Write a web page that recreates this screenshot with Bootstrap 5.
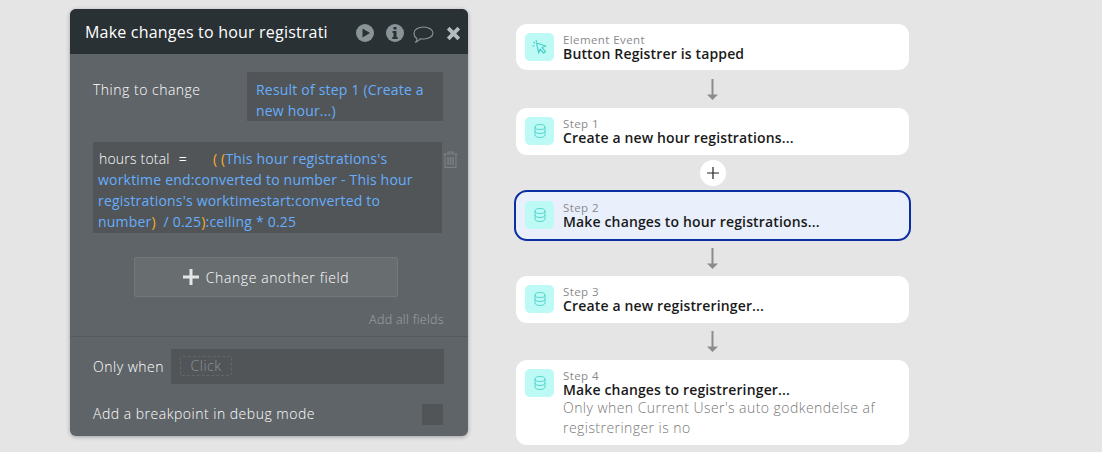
<!DOCTYPE html>
<html lang="en">
  <head>
    <meta charset="UTF-8" />
    <title>Workflow editor</title>
    <link href="https://cdn.jsdelivr.net/npm/bootstrap@5.3.0/dist/css/bootstrap.min.css" rel="stylesheet" />
    <style>
      body {
        background: #e5e5e5;
        font-family: "Open Sans", sans-serif;
        overflow: hidden;
        height: 452px;
      }
      .page-wrap { padding-left: 70px; }

      /* property editor */
      .editor-panel {
        width: 398px;
        height: 427px;
        margin-top: 9px;
        background: #5f6468;
        border-radius: 6px;
        box-shadow: 0 1px 4px rgba(0, 0, 0, .3);
        color: #fff;
        font-size: 14px;
        font-weight: 300;
        letter-spacing: .5px;
      }
      .editor-head {
        height: 45px;
        background: #2a3134;
        border-radius: 6px 6px 0 0;
        padding-left: 15px;
      }
      .editor-title {
        width: 242px;
        font-size: 16px;
        font-weight: 400;
        letter-spacing: .2px;
        white-space: nowrap;
        overflow: hidden;
      }
      .head-icons { margin-left: 29px; gap: 12px; padding-top: 3px; }
      .icon-near { margin: 3px 0 0 -3px; }
      .dyn-box {
        background: #515558;
        color: #66aefc;
        font-weight: 400;
        line-height: 21px;
        letter-spacing: .2px;
      }
      .thing-row { padding: 18px 25px 0 23px; }
      .thing-label { width: 154px; padding-top: 7px; }
      .thing-box { width: 196px; height: 49px; padding: 7px 9px; }
      .field-row { padding: 21px 10px 0 23px; }
      .field-box { width: 349px; height: 91px; padding: 6px 5px; }
      .field-name { color: #fff; font-weight: 300; padding-left: 1px; margin-right: 9px; }
      .field-eq { color: #fff; margin-right: 26px; }
      .brace { color: #f5b025; }
      .trash-icon { margin: 9px 0 0 1px; }
      .change-btn {
        width: 264px;
        height: 40px;
        margin: 24px 0 0 64px;
        background: #686d70;
        border: 1px solid #73787b;
        border-radius: 2px;
        font-size: 14px;
        font-weight: 300;
        letter-spacing: .6px;
        color: #fff;
        gap: 7px;
      }
      .all-fields {
        padding: 14px 24px 8px 0;
        font-size: 12.5px;
        line-height: 17px;
        letter-spacing: .3px;
        color: #a2a5a7;
      }
      .when-row {
        border-top: 1px solid #565b5e;
        padding: 12px 24px 0 23px;
      }
      .when-box { width: 273px; height: 35px; margin-left: 7px; background: #515558; padding: 7px 9px; }
      .click-chip {
        width: 52px;
        height: 20px;
        border: 1px dashed #636769;
        border-radius: 3px;
        color: #8f9294;
        line-height: 17px;
        text-align: center;
      }
      .debug-row { padding: 20px 25px 0 23px; }
      .debug-label { margin-top: -2px; }
      .debug-check { width: 21px; height: 21px; background: #515558; }

      /* workflow column */
      .flow-col { width: 393px; margin-left: 48px; padding-top: 24px; }
      .flow-card {
        background: #fff;
        border-radius: 11px;
        padding: 9px 9px 0 9px;
        gap: 9px;
        color: #1a1a1a;
      }
      .card-h46 { height: 46px; }
      .card-h47 { height: 47px; }
      .card-active {
        height: 51px;
        width: 397px;
        margin-left: -2px;
        background: #e9f0fc;
        border: 2px solid #0c2ea3;
        border-radius: 13px;
        padding: 9px 9px 0 9px;
      }
      .card-tall { height: 85px; }
      .step-icon {
        width: 29px;
        height: 28px;
        flex: none;
        background: #bdf9f5;
        border-radius: 5px;
      }
      .step-kicker { font-size: 11.5px; line-height: 12px; color: #8a8a8a; padding-top: 1px; letter-spacing: .4px; }
      .step-name { font-size: 14px; line-height: 15px; font-weight: 600; letter-spacing: .15px; }
      .step-note { font-size: 14px; line-height: 20px; font-weight: 300; color: #777; margin-top: 1px; letter-spacing: .45px; }
      .arrow-gap { height: 38px; }
      .arrow-short { height: 35px; }
      .arrow-last { height: 37px; }
      .plus-gap { height: 35px; }
      .plus-circle { width: 26px; height: 26px; background: #fff; border-radius: 50%; }
    </style>
  </head>
  <body>
    <svg width="0" height="0" class="d-block">
      <symbol id="db" viewBox="0 0 12 14">
        <g fill="none" stroke="#55d8ce" stroke-width="1">
          <ellipse cx="6" cy="3" rx="5" ry="2.500" />
          <path d="M1 3v8c0 1.400 2.200 2.500 5 2.500s5-1.100 5-2.500V3M1 7c0 1.400 2.200 2.500 5 2.500S11 8.400 11 7" />
        </g>
      </symbol>
      <symbol id="down" viewBox="0 0 11 21">
        <path d="M4.500 0h2v15.500h4.500l-5.500 5.500-5.500-5.500h4.500z" fill="#8c8c8c" />
      </symbol>
    </svg>

    <div class="page-wrap d-flex align-items-start">
      <div class="editor-panel">
        <div class="editor-head d-flex align-items-center">
          <div class="editor-title">Make changes to hour registrations...</div>
          <div class="head-icons d-flex align-items-center">
            <svg width="18" height="18" viewBox="0 0 18 18"><circle cx="9" cy="9" r="9" fill="#8a9498" /><path d="M6.500 4.500l7.500 4.500-7.500 4.500z" fill="#2a3134" /></svg>
            <svg width="18" height="18" viewBox="0 0 18 18"><circle cx="9" cy="9" r="9" fill="#8a9498" /><path d="M7.500 3h3v2.500h-3zM6.500 7h4v6h1.200v2H6.300v-2h1.200V9h-1z" fill="#2a3134" /></svg>
            <svg class="icon-near" width="21" height="18" viewBox="0 0 21 18"><path d="M10.500 1c5.200 0 9.500 2.500 9.500 6s-4.300 6-9.500 6c-1 0-2-.1-3-.3C6.300 14.300 4.500 15.700 2.300 16.500c.9-1 1.500-2.200 1.700-3.800C2 11.500 1 9.300 1 7c0-3.500 4.300-6 9.500-6z" fill="none" stroke="#8a9498" stroke-width="1.100" /></svg>
            <svg width="15" height="15" viewBox="0 0 15 15"><path d="M2.200 2.200l10.600 10.600M12.800 2.200L2.200 12.800" stroke="#b4bcbf" stroke-width="3.800" /></svg>
          </div>
        </div>

        <div class="thing-row d-flex">
          <div class="thing-label">Thing to change</div>
          <div class="thing-box dyn-box">Result of step 1 (Create a new hour...)</div>
        </div>

        <div class="field-row d-flex align-items-start">
          <div class="field-box dyn-box">
            <span class="field-name">hours total</span><span class="field-eq">=</span><span class="brace">( (</span>This hour registrations's worktime end:converted to number - This hour registrations's worktimestart:converted to number<span class="brace">)</span> &nbsp;/ 0.25<span class="brace">)</span>:ceiling * 0.25
          </div>
          <svg class="trash-icon" width="15" height="17" viewBox="0 0 15 17"><g fill="none" stroke="#7b8083" stroke-width="1.200"><path d="M.500 3h14M5 3V1h5v2M2 3v13.400h11V3" /><path d="M5 6v8M7.500 6v8M10 6v8" stroke-width="1.500" /></g></svg>
        </div>

        <button type="button" class="change-btn btn d-flex align-items-center justify-content-center p-0">
          <svg width="16" height="16" viewBox="0 0 16 16"><path d="M6.500 0h3v6.500H16v3H9.500V16h-3V9.500H0v-3h6.500z" fill="#e4e5e6" /></svg>
          <span>Change another field</span>
        </button>

        <div class="all-fields text-end">Add all fields</div>

        <div class="when-row d-flex align-items-center">
          <span>Only when</span>
          <div class="when-box"><div class="click-chip">Click</div></div>
        </div>

        <div class="debug-row d-flex justify-content-between align-items-center">
          <span class="debug-label">Add a breakpoint in debug mode</span>
          <div class="debug-check"></div>
        </div>
      </div>

      <div class="flow-col">
        <div class="flow-card card-h46 d-flex">
          <div class="step-icon d-flex align-items-center justify-content-center">
            <svg width="15" height="15" viewBox="0 0 15 15"><g fill="none" stroke="#3fcfc4" stroke-width="1.100"><path d="M4.500 3l9 3-3.500 1.600 3.500 3.900-1.700 1.700-3.600-3.900-1.500 3.400z" /><path d="M1.500 2l1.500 1.200M.5 6h2M4 .3l.6 1.600" /></g></svg>
          </div>
          <div>
            <div class="step-kicker">Element Event</div>
            <div class="step-name">Button Registrer is tapped</div>
          </div>
        </div>

        <div class="arrow-gap d-flex align-items-center justify-content-center"><svg width="11" height="21"><use href="#down" /></svg></div>

        <div class="flow-card card-h47 d-flex">
          <div class="step-icon d-flex align-items-center justify-content-center"><svg width="12" height="14"><use href="#db" /></svg></div>
          <div>
            <div class="step-kicker">Step 1</div>
            <div class="step-name">Create a new hour registrations...</div>
          </div>
        </div>

        <div class="plus-gap d-flex align-items-center justify-content-center">
          <div class="plus-circle d-flex align-items-center justify-content-center">
            <svg width="12" height="12" viewBox="0 0 12 12"><path d="M6 0v12M0 6h12" stroke="#222" stroke-width="1.200" /></svg>
          </div>
        </div>

        <div class="flow-card card-active d-flex">
          <div class="step-icon d-flex align-items-center justify-content-center"><svg width="12" height="14"><use href="#db" /></svg></div>
          <div>
            <div class="step-kicker">Step 2</div>
            <div class="step-name">Make changes to hour registrations...</div>
          </div>
        </div>

        <div class="arrow-short d-flex align-items-center justify-content-center"><svg width="11" height="21"><use href="#down" /></svg></div>

        <div class="flow-card card-h47 d-flex">
          <div class="step-icon d-flex align-items-center justify-content-center"><svg width="12" height="14"><use href="#db" /></svg></div>
          <div>
            <div class="step-kicker">Step 3</div>
            <div class="step-name">Create a new registreringer...</div>
          </div>
        </div>

        <div class="arrow-last d-flex align-items-center justify-content-center"><svg width="11" height="21"><use href="#down" /></svg></div>

        <div class="flow-card card-tall d-flex">
          <div class="step-icon d-flex align-items-center justify-content-center"><svg width="12" height="14"><use href="#db" /></svg></div>
          <div>
            <div class="step-kicker">Step 4</div>
            <div class="step-name">Make changes to registreringer...</div>
            <div class="step-note">Only when Current User's auto godkendelse af registreringer is no</div>
          </div>
        </div>
      </div>
    </div>

    <script src="https://cdn.jsdelivr.net/npm/bootstrap@5.3.0/dist/js/bootstrap.bundle.min.js"></script>
  </body>
</html>
